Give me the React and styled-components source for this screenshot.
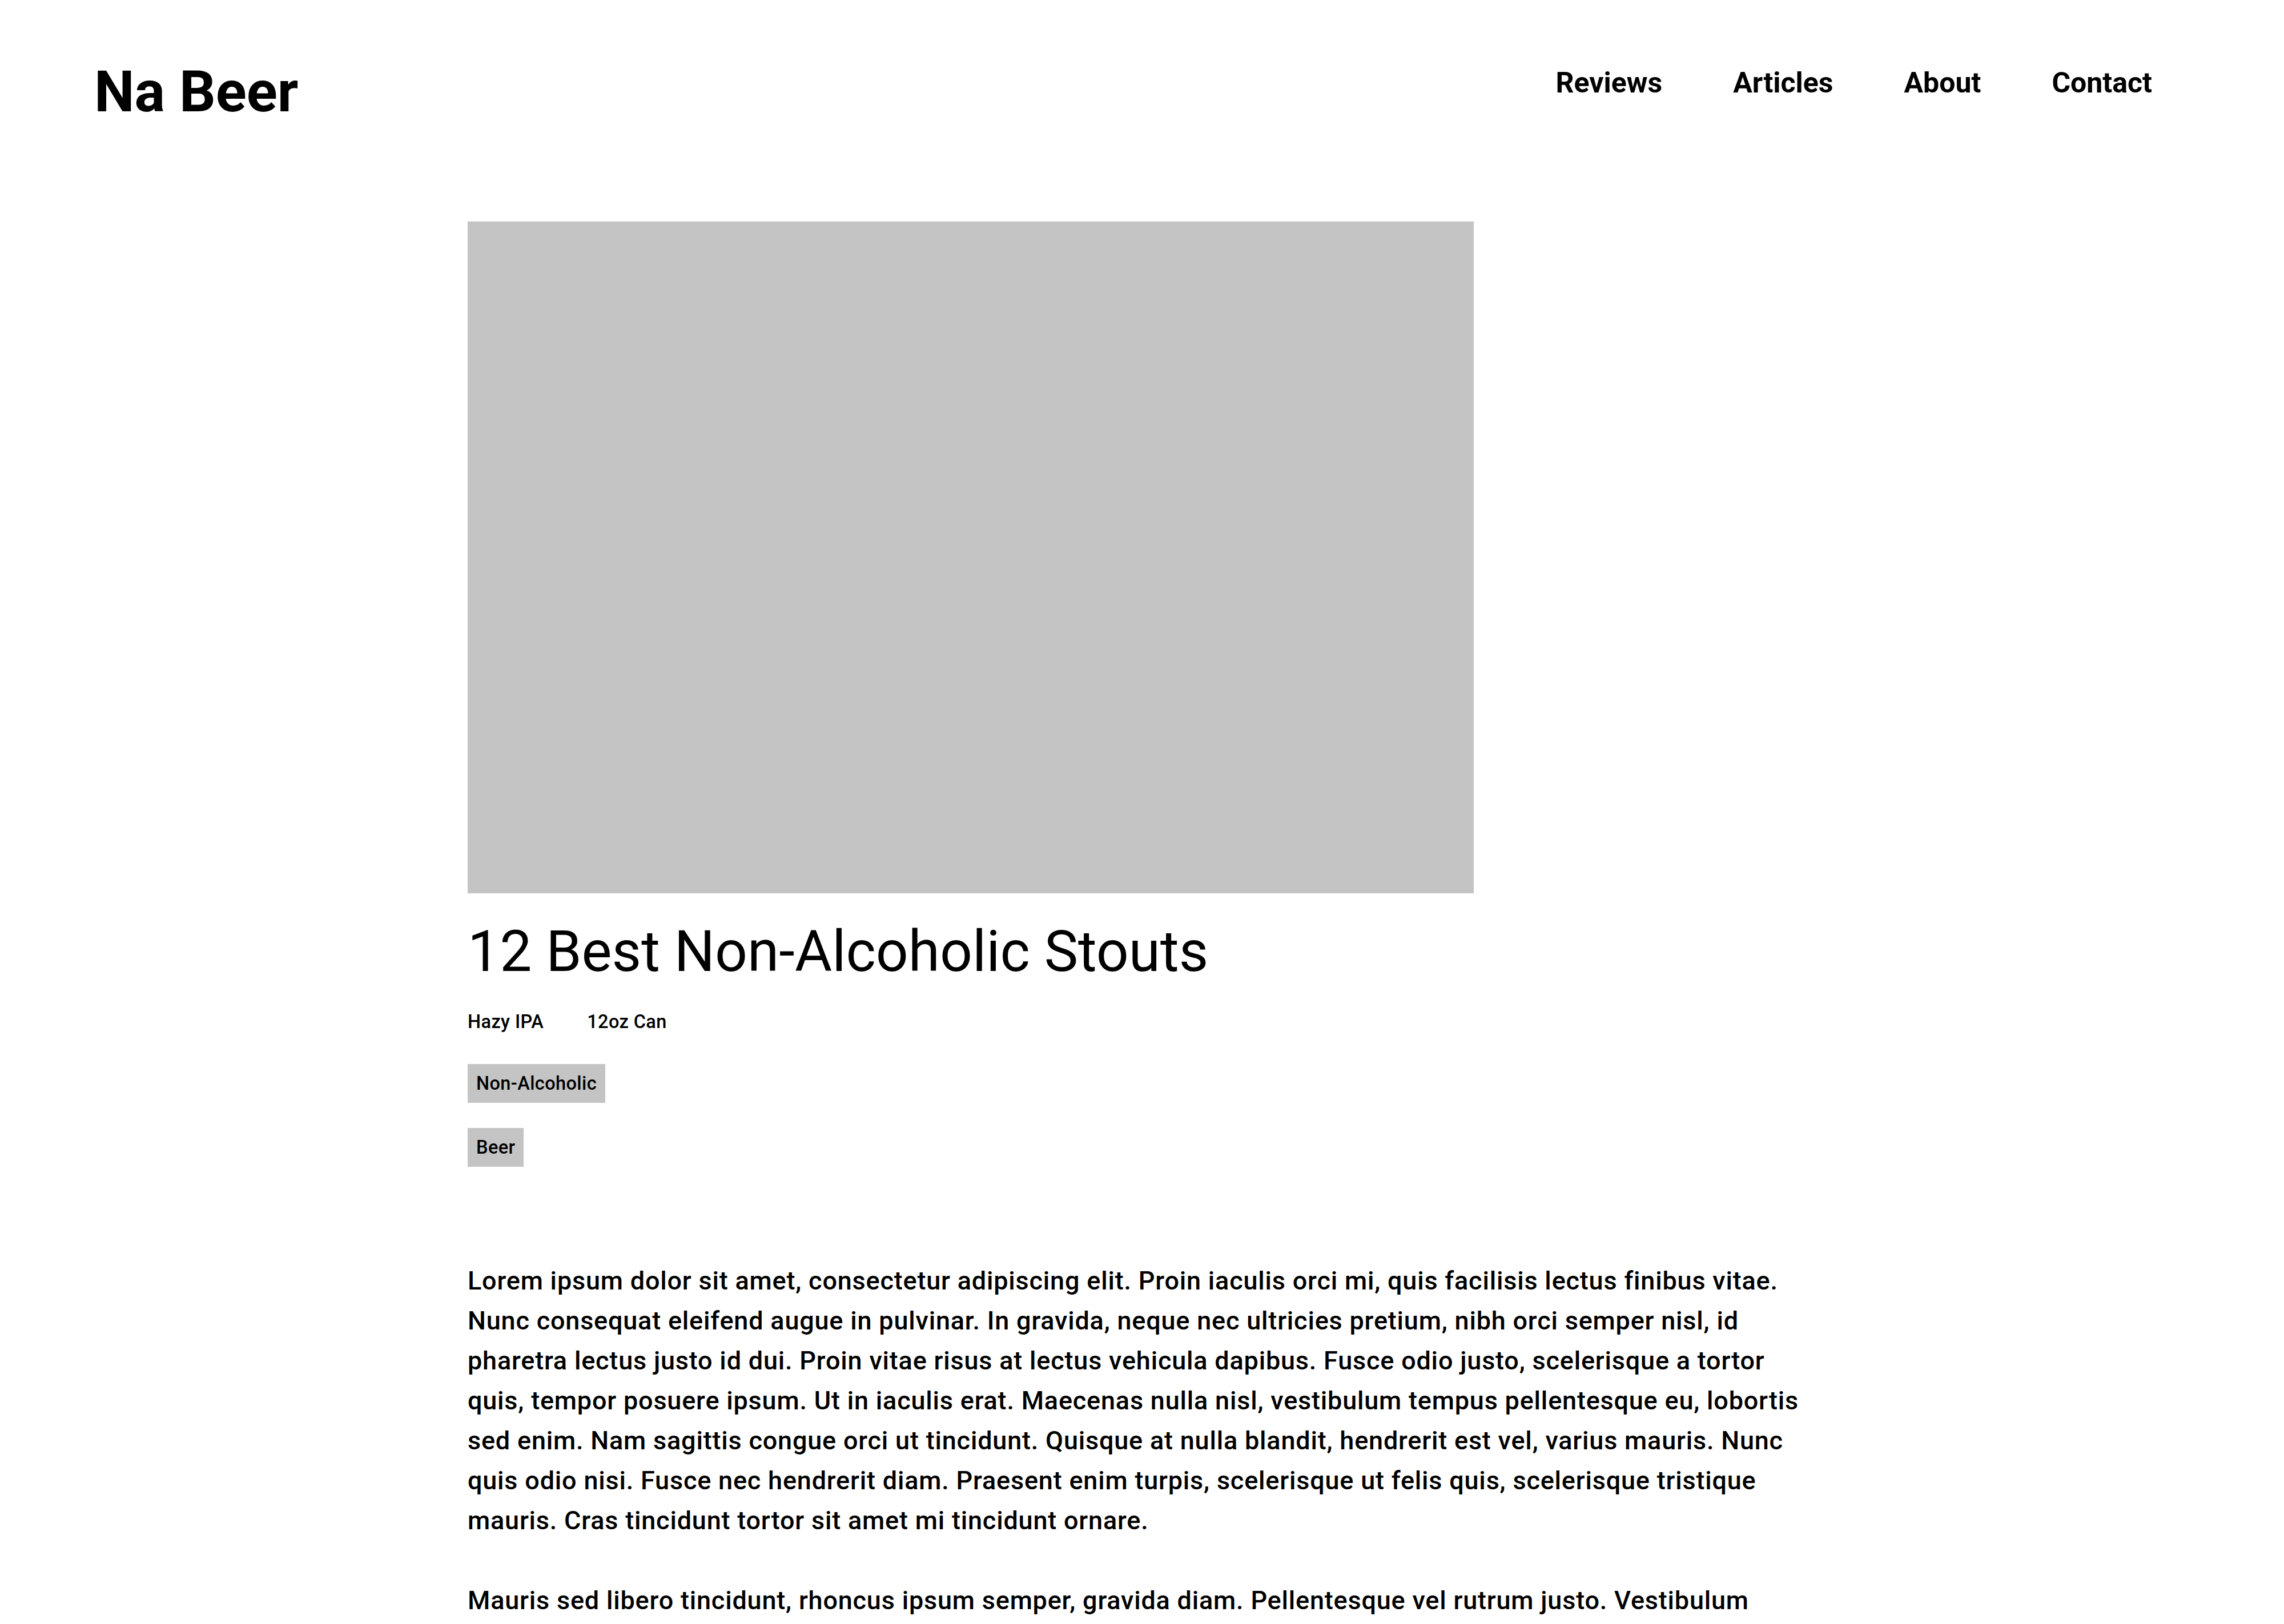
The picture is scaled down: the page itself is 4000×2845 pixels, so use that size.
import React from 'react'
import styled, { createGlobalStyle } from 'styled-components'

const GlobalStyle = createGlobalStyle`
  body {
    margin: 0;
    background: #ffffff;
    color: #000000;
    font-family: Roboto, "Liberation Sans", Arial, sans-serif;
  }
`

const navLinks = ['Reviews', 'Articles', 'About', 'Contact']
const tags = ['Non-Alcoholic', 'Beer']

const paragraphs = [
  'Lorem ipsum dolor sit amet, consectetur adipiscing elit. Proin iaculis orci mi, quis facilisis lectus finibus vitae. Nunc consequat eleifend augue in pulvinar. In gravida, neque nec ultricies pretium, nibh orci semper nisl, id pharetra lectus justo id dui. Proin vitae risus at lectus vehicula dapibus. Fusce odio justo, scelerisque a tortor quis, tempor posuere ipsum. Ut in iaculis erat. Maecenas nulla nisl, vestibulum tempus pellentesque eu, lobortis sed enim. Nam sagittis congue orci ut tincidunt. Quisque at nulla blandit, hendrerit est vel, varius mauris. Nunc quis odio nisi. Fusce nec hendrerit diam. Praesent enim turpis, scelerisque ut felis quis, scelerisque tristique mauris. Cras tincidunt tortor sit amet mi tincidunt ornare.',
  'Mauris sed libero tincidunt, rhoncus ipsum semper, gravida diam. Pellentesque vel rutrum justo. Vestibulum vehicula tincidunt ligula, non sollicitudin lorem tempus quis. Donec sit amet lorem at nisl tempus cursus. Aliquam erat volutpat. Integer vitae sem quis arcu feugiat facilisis. Sed non sapien ut velit luctus aliquet.',
]

function App() {
  return (
    <>
      <GlobalStyle />
      <Header>
        <Logo>Na Beer</Logo>
        <Nav>
          {navLinks.map((link) => (
            <NavLink key={link} href="#">
              {link}
            </NavLink>
          ))}
        </Nav>
      </Header>
      <Article>
        <Hero />
        <Title>12 Best Non-Alcoholic Stouts</Title>
        <Meta>
          <span>Hazy IPA</span>
          <span>12oz Can</span>
        </Meta>
        <Tags>
          {tags.map((tag) => (
            <Tag key={tag}>{tag}</Tag>
          ))}
        </Tags>
        <Body>
          {paragraphs.map((text, i) => (
            <Paragraph key={i}>{text}</Paragraph>
          ))}
        </Body>
      </Article>
    </>
  )
}

export default App

const Header = styled.header`
  display: flex;
  justify-content: space-between;
  align-items: flex-start;
  padding: 102px 169px 0 165px;
`

const Logo = styled.div`
  font-size: 100px;
  font-weight: 700;
  line-height: normal;
`

const Nav = styled.nav`
  display: flex;
  padding-top: 14px;
`

const NavLink = styled.a`
  padding: 0 62px;
  font-size: 50px;
  font-weight: 700;
  color: #000000;
  text-decoration: none;
`

const Article = styled.main`
  width: 2362px;
  margin: 169px auto 0;
`

const Hero = styled.div`
  width: 1762px;
  height: 1177px;
  background: #c4c4c4;
`

const Title = styled.h1`
  margin: 43px 0 0;
  font-size: 100px;
  font-weight: 400;
  line-height: normal;
`

const Meta = styled.div`
  display: flex;
  gap: 76px;
  margin-top: 46px;
  font-size: 32.5px;
  font-weight: 500;
  letter-spacing: 0.4px;
  line-height: normal;
`

const Tags = styled.div`
  display: flex;
  flex-direction: column;
  align-items: flex-start;
  gap: 44px;
  margin-top: 55px;
`

const Tag = styled.span`
  padding: 15px;
  background: #c4c4c4;
  font-size: 32.5px;
  font-weight: 500;
  letter-spacing: 0.4px;
  line-height: normal;
`

const Body = styled.div`
  margin-top: 165px;
`

const Paragraph = styled.p`
  margin: 0 0 70px;
  font-size: 45px;
  font-weight: 500;
  letter-spacing: 0.8px;
  line-height: 70px;
`
